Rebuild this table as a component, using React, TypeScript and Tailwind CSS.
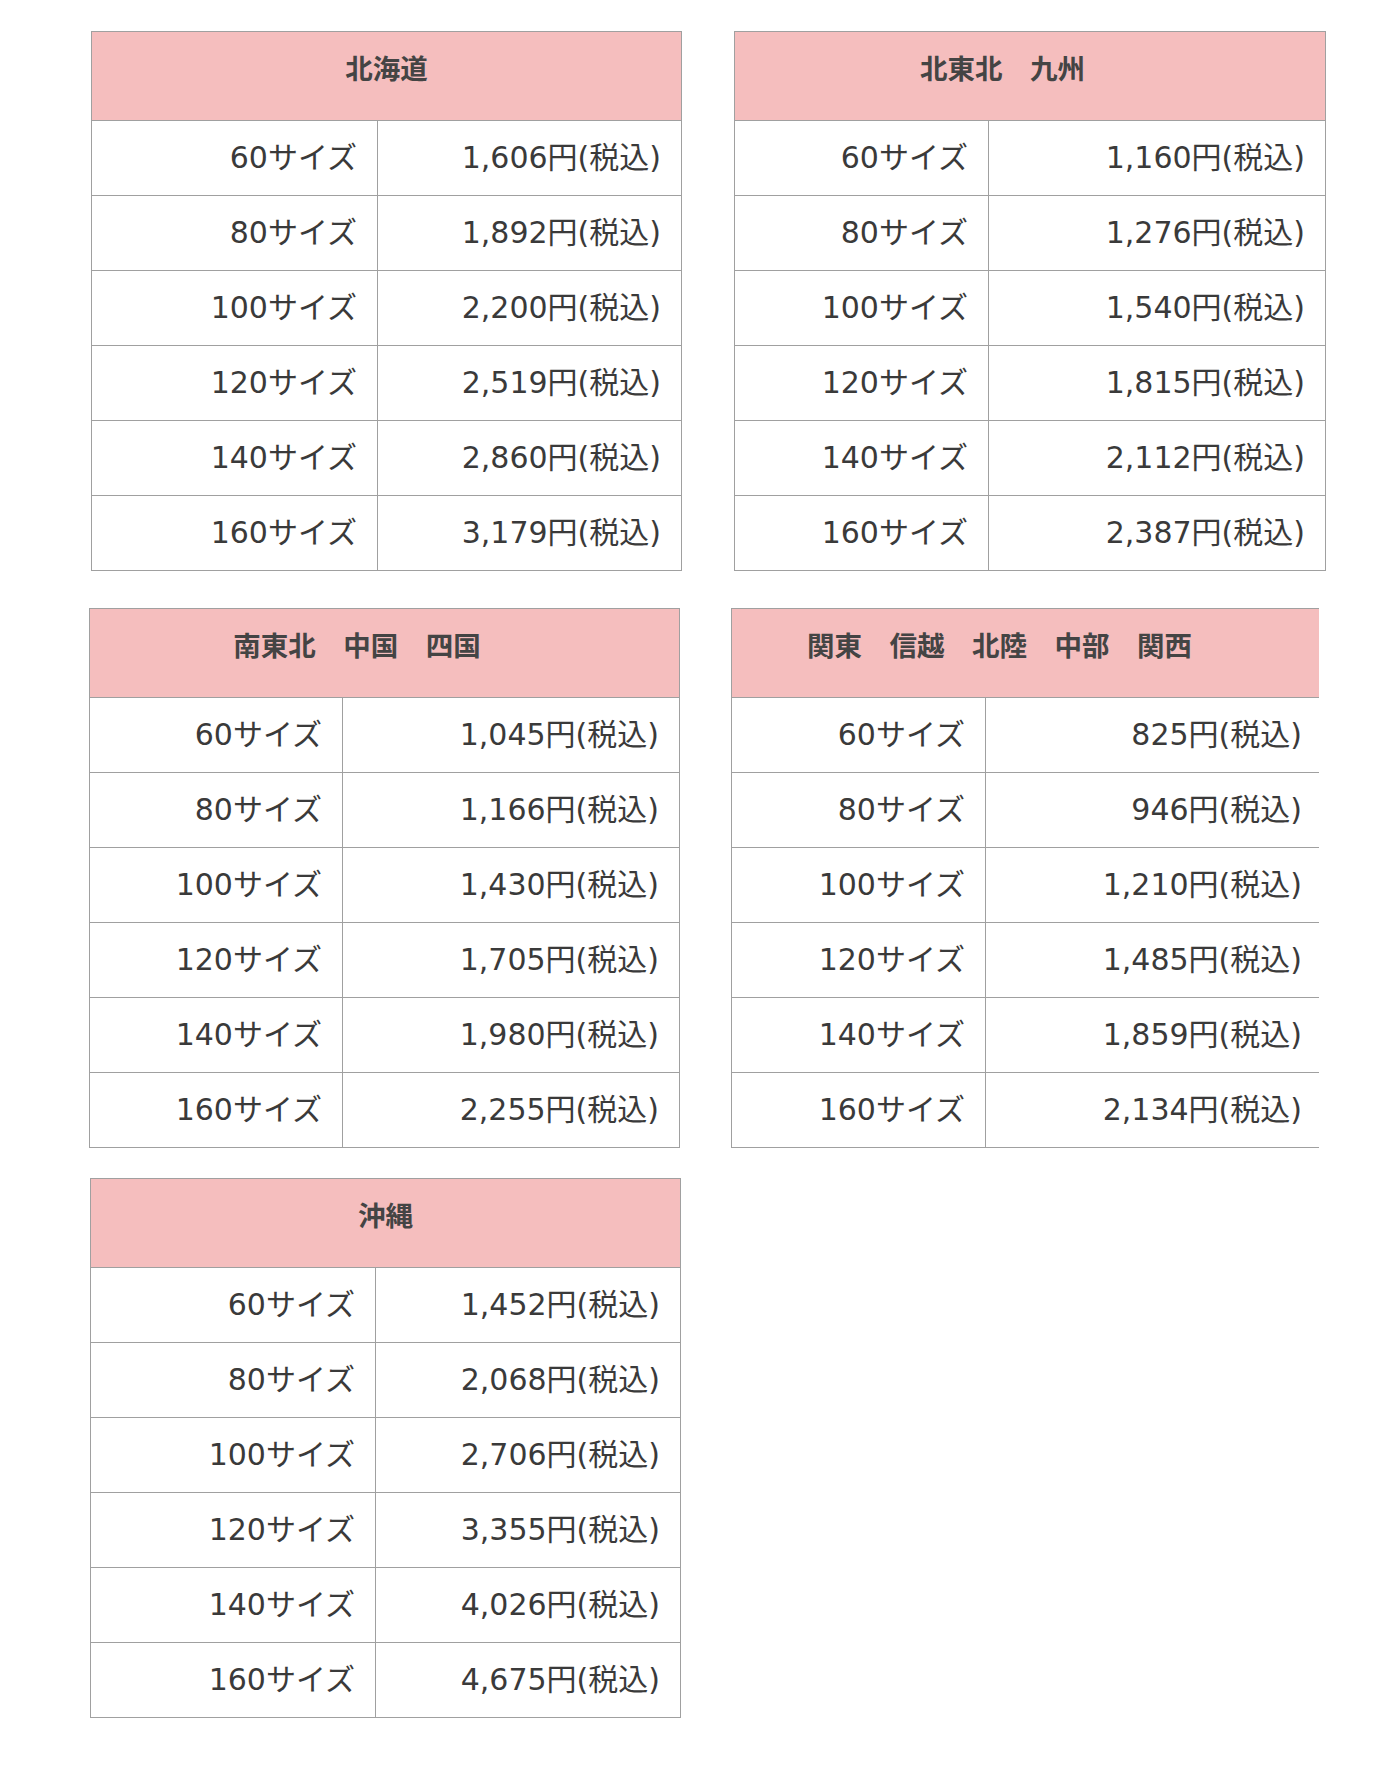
import React from 'react';

interface Rate {
  size: string;
  price: string;
}

interface Region {
  title: string;
  wide?: boolean;
  rates: Rate[];
}

const sizes = ['60サイズ', '80サイズ', '100サイズ', '120サイズ', '140サイズ', '160サイズ'];

const mk = (title: string, prices: string[], wide = false): Region => ({
  title,
  wide,
  rates: prices.map((p, i) => ({ size: sizes[i], price: `${p}円(税込)` })),
});

const hokkaido = mk('北海道', ['1,606', '1,892', '2,200', '2,519', '2,860', '3,179']);
const kitaTohoku = mk('北東北　九州', ['1,160', '1,276', '1,540', '1,815', '2,112', '2,387'], true);
const minamiTohoku = mk('南東北　中国　四国', ['1,045', '1,166', '1,430', '1,705', '1,980', '2,255'], true);
const kanto = mk('関東　信越　北陸　中部　関西', ['825', '946', '1,210', '1,485', '1,859', '2,134'], true);
const okinawa = mk('沖縄', ['1,452', '2,068', '2,706', '3,355', '4,026', '4,675']);

// latin digits wide like the Verdana part of Meiryo, kana/kanji from Noto CJK
const bodyFont = { fontFamily: '"DejaVu Sans", "Noto Sans CJK JP", sans-serif' };
const headFont = { fontFamily: '"Noto Sans CJK JP", sans-serif' };

const RateTable: React.FC<{ region: Region; labelWidth: string; className?: string }> = ({
  region,
  labelWidth,
  className = '',
}) => (
  <div className={`border border-[#a0a0a0] bg-white text-[#3a3a3a] ${className}`}>
    <div
      className={`h-[88px] bg-[#f5bebe] flex justify-center pt-[17px] ${region.wide ? 'pr-[55px]' : ''}`}
      style={headFont}
    >
      <span className="text-[27.5px] font-bold leading-[36px] text-[#444]">{region.title}</span>
    </div>
    {region.rates.map((r) => (
      <div key={r.size} className="flex h-[75px] border-t border-[#a0a0a0]" style={bodyFont}>
        <div className={`${labelWidth} shrink-0 border-r border-[#a0a0a0] flex items-center justify-end pr-5 text-[30px] leading-[40px]`}>
          {r.size}
        </div>
        <div className="flex-1 flex items-center justify-end pr-5 text-[30px] leading-[40px]">{r.price}</div>
      </div>
    ))}
  </div>
);

export default function App() {
  return (
    <div className="w-[1380px] min-h-[1784px] bg-white pt-[31px]">
      <div className="flex">
        <RateTable region={hokkaido} labelWidth="w-[286px]" className="ml-[91px] w-[591px]" />
        <RateTable region={kitaTohoku} labelWidth="w-[254px]" className="ml-[52px] w-[592px]" />
      </div>
      <div className="flex mt-[37px]">
        <RateTable region={minamiTohoku} labelWidth="w-[253px]" className="ml-[89px] w-[591px]" />
        <div className="ml-[51px] w-[588px] overflow-hidden">
          <RateTable region={kanto} labelWidth="w-[254px]" className="w-[592px]" />
        </div>
      </div>
      <div className="flex mt-[30px]">
        <RateTable region={okinawa} labelWidth="w-[285px]" className="ml-[90px] w-[591px]" />
      </div>
    </div>
  );
}
